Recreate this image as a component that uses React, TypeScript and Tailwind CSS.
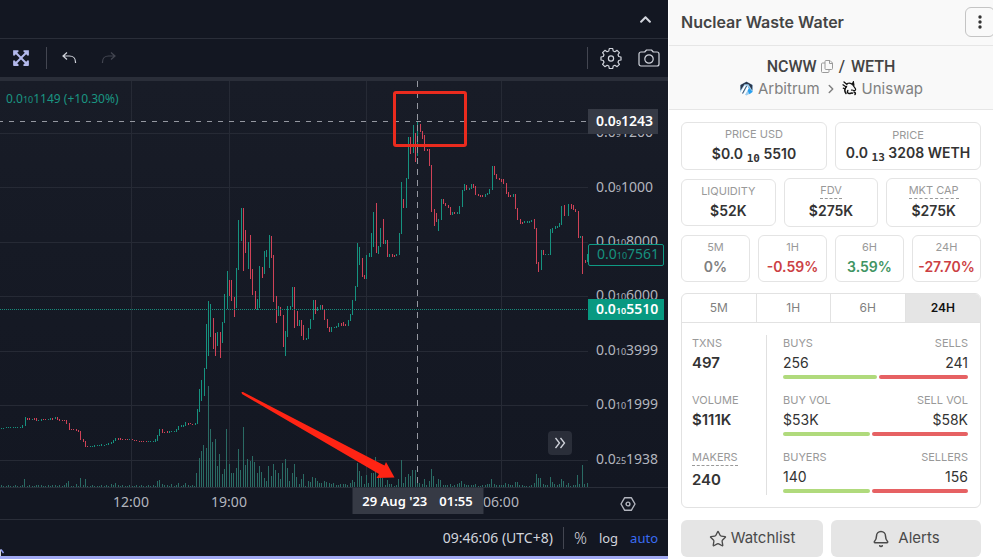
import { FaChevronUp, FaExpandArrowsAlt } from "react-icons/fa";
import { Bell, ChevronRight, Star } from "lucide-react";

const CHART_FONT = "font-['Noto_Sans','Open_Sans',sans-serif]";
const UP = "#16927f";
const DOWN = "#cf4257";

// The plot's own coordinate space: x 0..588, y 81..487.
const PLOT = { left: 0, top: 81, width: 588, height: 406 };

// Each candle is "x top bottom direction".
const CANDLES = `
1 428 429 u;3 428 429 u;6 427 428 u;8 427 428 u;10 427 428 u;13 427 428 u;15 427 428 u;17 427 428 u;20 427 428 u;22 425 428 u;25 417 426 u;
27 418 420 d;29 418 420 d;32 419 420 u;34 418 420 d;36 418 421 d;38 420 421 u;41 419 421 u;43 419 420 d;45 419 420 d;48 419 420 u;50 418 420 u;52 418 420 d;55 417 419 u;57 417 420 d;
59 419 421 d;62 420 421 d;64 420 421 d;66 420 424 d;69 423 430 d;71 429 430 d;73 429 430 d;76 429 431 d;78 430 432 d;80 431 440 d;83 439 442 d;85 441 447 d;87 446 447 d;
90 446 447 u;92 446 447 u;94 445 447 u;97 445 446 u;99 445 446 u;101 444 446 u;104 445 446 u;106 444 445 u;108 443 445 u;111 442 444 u;113 440 443 u;115 438 441 u;118 438 440 d;
120 438 440 d;122 439 440 d;125 439 440 d;127 439 440 d;129 439 440 u;132 439 440 d;134 440 441 d;136 440 441 d;139 441 442 d;141 441 442 d;143 441 442 d;146 441 442 d;148 441 442 u;150 441 442 u;153 441 442 u;155 439 442 u;
157 435 441 u;159 429 436 u;162 429 433 d;164 432 433 d;167 431 433 d;169 431 433 u;171 431 432 u;174 431 432 u;176 429 432 u;178 426 430 u;181 425 427 u;183 425 427 u;185 422 426 u;188 423 425 d;190 423 424 d;192 424 425 d;195 423 425 u;
197 409 424 u;199 389 412 u;201 380 401 u;204 368 396 u;206 324 369 u;208 301 356 u;210 304 337 u;213 318 349 d;215 333 356 d;217 332 346 u;220 332 358 d;222 322 343 u;224 294 323 u;227 271 309 u;229 280 296 d;231 280 301 d;
234 297 317 d;236 268 308 u;238 220 270 u;241 208 241 u;243 208 271 d;245 230 253 d;248 242 269 u;250 235 279 d;252 269 295 d;255 291 309 d;257 299 310 u;259 266 308 u;262 267 278 d;264 251 274 u;266 250 257 u;269 235 268 u;
271 236 258 d;273 255 302 d;276 296 323 d;278 306 316 u;280 307 316 d;283 315 347 d;285 331 356 u;287 306 337 u;290 306 310 u;292 287 307 u;294 287 328 d;297 311 326 d;299 320 326 u;301 320 336 d;303 325 340 d;306 338 340 u;
308 328 339 u;310 319 329 u;313 300 320 u;315 300 314 d;317 307 311 u;320 305 310 u;322 305 310 d;324 309 320 d;327 319 328 d;329 327 332 d;331 327 332 u;334 327 328 u;336 326 328 u;338 323 327 u;341 323 326 d;343 322 326 d;
345 324 326 d;348 320 326 u;350 314 321 u;352 300 315 u;355 286 301 u;357 243 287 u;359 247 265 u;362 258 277 d;364 275 279 d;366 255 279 u;369 253 257 u;371 233 257 u;373 212 247 u;376 203 253 d;378 246 254 u;380 228 247 u;
383 219 244 d;385 240 244 u;387 240 257 d;389 254 257 u;392 254 257 d;394 255 257 d;396 254 256 u;399 233 255 u;401 182 234 u;403 199 208 d;406 178 208 u;408 137 179 u;410 137 154 d;413 125 153 u;415 133 162 d;417 121 156 u;
420 124 132 d;422 131 139 d;424 135 151 d;427 149 151 d;429 149 166 d;431 165 212 d;434 209 226 d;436 213 222 d;438 219 231 u;441 199 220 u;443 199 204 d;445 203 206 d;448 205 208 d;450 207 215 d;452 212 215 u;454 212 214 d;457 212 214 u;459 206 214 u;
462 190 207 u;464 184 191 u;466 185 190 d;469 188 190 u;471 184 189 u;473 184 188 d;475 186 195 d;478 194 196 d;480 195 197 d;482 195 197 d;485 194 197 u;487 193 195 u;489 189 194 u;492 166 190 u;494 166 175 d;496 174 179 d;
499 178 180 d;501 179 182 d;503 179 184 d;506 183 194 d;508 192 197 d;510 195 197 d;513 194 197 u;515 194 209 d;517 208 220 d;520 219 224 d;522 222 224 d;524 221 223 u;527 221 223 u;529 221 223 u;531 220 222 u;534 219 229 d;
536 228 264 d;538 262 272 d;541 250 270 u;543 250 255 d;545 254 255 u;548 254 255 u;550 229 255 u;552 228 233 u;555 226 229 u;557 226 228 u;559 223 227 u;561 206 225 u;564 205 216 d;568 204 216 u;571 204 209 d;573 205 210 d;575 209 212 d;578 211 238 d;580 236 238 u;582 236 274 d;585 260 263 d;587 254 262 u`
  .trim()
  .split(";")
  .map((row) => {
    const [x, top, bottom, dir] = row.trim().split(" ");
    return { x: +x, top: +top, bottom: +bottom, color: dir === "u" ? UP : DOWN };
  });

// Each volume bar is "x height".
const VOLUMES = `
1 2;3 1;6 1;8 2;10 1;13 1;15 2;17 1;20 1;22 2;24 8;27 1;29 2;32 1;34 1;36 2;38 2;41 2;43 1;45 1;48 2;50 1;52 2;55 2;57 1;59 2;62 1;64 2;66 4;68 6;71 1;73 1;76 3;78 1;80 9;83 2;85 8;87 1;90 1;92 2;94 1;97 1;99 1;101 2;104 1;106 2;108 1;111 3;113 2;115 4;118 2;120 1;122 2;125 1;127 1;129 2;132 1;134 1;136 2;139 1;141 2;143 1;146 1;148 2;150 1;153 2;155 1;157 6;159 7;162 3;164 2;167 2;169 1;171 3;174 1;176 2;178 4;181 1;183 2;185 4;188 2;190 1;192 2;194 1;
196 14;199 29;201 36;203 42;206 39;208 101;210 58;212 45;215 48;217 21;219 33;222 13;224 18;226 58;229 23;231 14;233 14;236 19;238 38;240 17;243 60;245 22;247 28;250 26;252 31;254 25;257 14;259 21;261 15;264 9;266 6;268 21;271 11;273 23;275 17;278 14;280 8;282 24;285 28;287 19;289 6;292 14;294 23;296 10;299 3;301 8;303 13;305 1;308 6;310 5;312 10;315 9;317 6;319 4;321 4;324 6;326 5;329 4;331 3;333 4;336 2;338 2;340 3;343 3;345 3;347 2;350 4;352 7;354 5;
357 24;359 16;361 11;364 3;366 12;368 4;371 14;373 14;375 30;378 10;380 10;382 9;385 2;387 7;389 3;391 3;394 1;396 2;398 8;401 27;403 4;405 10;408 13;410 11;412 17;415 17;417 10;419 4;422 3;424 8;426 2;429 6;431 18;433 11;436 3;438 8;440 7;443 2;445 2;447 2;450 3;452 1;454 2;457 3;459 4;461 6;464 3;466 2;468 2;471 2;473 2;475 3;478 1;480 1;482 2;485 2;487 3;489 3;491 8;494 3;496 2;499 2;501 2;503 2;505 4;508 3;510 2;512 2;515 5;517 5;519 2;522 2;524 1;526 1;529 1;531 2;534 4;536 13;538 9;540 9;543 3;545 2;547 2;550 10;552 5;554 3;557 2;559 3;561 8;563 6;566 2;568 4;570 1;573 2;575 2;577 12;579 3;582 22;584 3;587 4`
  .trim()
  .split(";")
  .map((row) => {
    const [x, h] = row.trim().split(" ");
    return { x: +x, h: +h };
  });

// Small prices fold their run of leading zeros into a little count.
const PRICE_TICKS = [
  { zeros: "9", digits: "1200" },
  { zeros: "9", digits: "1000" },
  { zeros: "10", digits: "8000" },
  { zeros: "10", digits: "6000" },
  { zeros: "10", digits: "3999" },
  { zeros: "10", digits: "1999" },
  { zeros: "25", digits: "1938" },
];
const PRICE_LINES = [133, 187, 242, 296, 351, 405, 460];
const TIME_TICKS = [
  { label: "12:00", x: 131 },
  { label: "19:00", x: 229 },
  { label: "", x: 366 },
  { label: "06:00", x: 501 },
];

function TinyPrice({ zeros, digits }: { zeros: string; digits: string }) {
  return (
    <span>
      0.0<span className="text-[9px]">{zeros}</span>
      {digits}
    </span>
  );
}

function Plot() {
  return (
    <svg
      className="absolute inset-0 h-full w-full"
      viewBox={`${PLOT.left} ${PLOT.top} ${PLOT.width} ${PLOT.height}`}
      preserveAspectRatio="none"
      shapeRendering="crispEdges"
      role="img"
      aria-label="NCWW price chart"
    >
      {PRICE_LINES.map((y) => (
        <rect key={y} x="0" y={y} width="588" height="1" fill="#262a35" />
      ))}
      {TIME_TICKS.map((t) => (
        <rect key={t.x} x={t.x} y="81" width="1" height="406" fill="#262a35" />
      ))}
      {VOLUMES.map((v) => (
        <rect key={v.x} x={v.x} y={487 - v.h} width="1" height={v.h} fill="#2a6b64" />
      ))}
      {CANDLES.map((c) => (
        <rect key={c.x} x={c.x} y={c.top} width="1" height={c.bottom - c.top} fill={c.color} />
      ))}
      <path d="M0 309.5H588" stroke="#168c7c" strokeDasharray="1 1" />
      <path d="M-2 121.5H588" stroke="#9598a1" strokeDasharray="5 6" />
      <path d="M417.5 81V487" stroke="#9598a1" strokeDasharray="6 5" />
      <g shapeRendering="auto">
        <path d="M241.5 392 L243 392 L384.5 465.500 L386 462 L394.5 477.5 L376.5 478 L379 474 L242 394 Z" fill="#ff2414" />
        <rect x="394.5" y="92.5" width="71" height="53" rx="1.5" fill="none" stroke="#ea2b1e" strokeWidth="3" />
      </g>
    </svg>
  );
}

function UndoIcon() {
  return (
    <svg width="16" height="14" viewBox="0 0 16 14" fill="none" stroke="currentColor" strokeWidth="1.2">
      <path d="M6 1.500 2 5l4 3.500M2 5h6.500c3.500 0 6 2.500 6 6v1" />
    </svg>
  );
}

function GearIcon() {
  return (
    <svg width="22" height="22" viewBox="0 0 22 22" fill="none" stroke="currentColor" strokeWidth="1.200" strokeLinejoin="round">
      <path d="M9.300 1.500h3.400l.5 2.500 1.700.7 2.200-1.400 2.300 2.300-1.400 2.200.7 1.700 2.300.5v3l-2.300.5-.7 1.700 1.400 2.200-2.300 2.300-2.200-1.400-1.700.7-.5 2.500H9.300L8.800 19l-1.700-.7-2.200 1.400-2.300-2.300L4 15.200l-.7-1.700L1 13v-3l2.300-.5L4 7.800 2.600 5.600l2.300-2.300 2.200 1.400L8.800 4z" />
      <circle cx="11" cy="11.500" r="2.600" />
    </svg>
  );
}

function CameraIcon() {
  return (
    <svg width="22" height="18" viewBox="0 0 22 18" fill="none" stroke="currentColor" strokeWidth="1.200" strokeLinejoin="round">
      <path d="M3 3h3.700l1.800-2h5l1.800 2H19a2 2 0 0 1 2 2v10a2 2 0 0 1-2 2H3a2 2 0 0 1-2-2V5a2 2 0 0 1 2-2z" />
      <circle cx="11" cy="10" r="4.200" />
    </svg>
  );
}

function HexIcon() {
  return (
    <svg width="16" height="16" viewBox="0 0 16 16" fill="none" stroke="currentColor" strokeWidth="1.400">
      <path d="M4.700 1.700h6.600L15 8l-3.700 6.300H4.700L1 8z" strokeLinejoin="round" />
      <circle cx="8" cy="8" r="1.900" />
    </svg>
  );
}

function CopyIcon() {
  return (
    <svg width="12" height="13" viewBox="0 0 12 13" fill="none" stroke="#9a9a9a" strokeWidth="1">
      <path d="M4 1.500a1 1 0 0 1 1-1h4l2.500 2.500v5.500a1 1 0 0 1-1 1H5a1 1 0 0 1-1-1zM8.500.5V3.500h3" />
      <path d="M4 3H1.500a1 1 0 0 0-1 1v7.500a1 1 0 0 0 1 1h5.500a1 1 0 0 0 1-1v-2" />
    </svg>
  );
}

function ArbitrumIcon() {
  return (
    <svg width="15" height="15" viewBox="0 0 15 15">
      <path d="M7.500.5 13.800 4v7l-6.300 3.500L1.200 11V4z" fill="#9dcced" />
      <path d="M7.500.8 13.300 4v5.500L9.500 3.300H5.500L1.500 9.500V4z" fill="#2d374b" />
      <path d="M9.300 6 13.500 10.800l-3 2.500-2.500-5z" fill="#28a0f0" />
      <path d="M5.500 4.500h1.700L3 12.300l-1.600-1zM8.300 5l1.500 2.500-4 6.500-1.500-.8z" fill="#fff" />
      <path d="M7.600 5 3.500 12.500" stroke="#2d374b" strokeWidth=".8" />
    </svg>
  );
}

function UniswapIcon() {
  return (
    <svg width="16" height="15" viewBox="0 0 16 15" fill="none" stroke="#111" strokeLinecap="round">
      <path d="M2 1l3 2.500M1 3.800l2.800 2M1.300 7.200l1.700.8" strokeWidth="1.300" />
      <path d="M5 2.500c2-.8 4.500-.3 5.800 1.500l2.400 3.300c.8 1.200.4 2-.6 2.200-1.400.2-2-.8-3.100-.4" strokeWidth="1.200" />
      <path d="M4.500 5.500c-1.800 2-2 5-.5 7M5.800 9.500c-.8 1.600-.2 2.900 1.200 3.100 1.600.2 2.300-1 3.500-.4" strokeWidth="1.500" />
      <path d="M10.500 2.800l.8-1.500.5 2.800M12 11c1.200.2 1.700 1.200 1 2.500" strokeWidth="1.500" />
    </svg>
  );
}

function MoreIcon() {
  return (
    <svg width="4" height="14" viewBox="0 0 4 14" fill="#333">
      <circle cx="2" cy="2" r="1.700" />
      <circle cx="2" cy="7" r="1.700" />
      <circle cx="2" cy="12" r="1.700" />
    </svg>
  );
}

function ChartPane() {
  return (
    <section className={`flex min-w-0 flex-1 flex-col bg-[#131722] text-[#d1d4dc] ${CHART_FONT}`}>
      <div className="flex h-[39px] items-center justify-end border-b border-[#2a2e39] pr-4">
        <button type="button" aria-label="Collapse">
          <FaChevronUp size={13} />
        </button>
      </div>
      <div className="flex h-[42px] items-center border-b-4 border-[#2a2e39] pr-2 pl-3">
        <button type="button" aria-label="Full size" className="text-[#b3b9ec]">
          <FaExpandArrowsAlt size={18} />
        </button>
        <span className="mr-3.5 ml-4 h-[22px] w-px bg-[#434651]" />
        <button type="button" aria-label="Undo">
          <UndoIcon />
        </button>
        <button type="button" aria-label="Redo" className="ml-6 -scale-x-100 text-[#434651]">
          <UndoIcon />
        </button>
        <span className="mr-3 ml-auto h-[22px] w-px bg-[#434651]" />
        <button type="button" aria-label="Settings" className="mr-4">
          <GearIcon />
        </button>
        <button type="button" aria-label="Snapshot">
          <CameraIcon />
        </button>
      </div>

      <div className="flex min-h-[406px] flex-1 border-b border-[#2a2e39] bg-linear-to-b from-[#181c27] to-[#131722]">
        <div className="relative flex-1">
          <Plot />
          <p className="absolute top-2 left-1.5 text-xs leading-5 text-[#1a9582]">
            <TinyPrice zeros="10" digits="1149" /> (+10.30%)
          </p>
          <button
            type="button"
            aria-label="Scroll to latest bar"
            className="absolute right-4 bottom-8 flex size-6 items-center justify-center rounded bg-[#2a2e39]"
          >
            <svg width="12" height="12" viewBox="0 0 12 12" fill="none" stroke="currentColor" strokeWidth="1.300">
              <path d="M1.500 1l4 5-4 5M6.500 1l4 5-4 5" />
            </svg>
          </button>
        </div>
        <div className="relative flex w-20 flex-col pt-[25px] text-sm leading-5 text-[#b2b5be]">
          {PRICE_TICKS.map((t) => (
            <div key={t.digits} className="flex flex-1 items-center pl-2">
              <TinyPrice zeros={t.zeros} digits={t.digits} />
            </div>
          ))}
          <span className="absolute top-7 left-0 flex h-[25px] w-[70px] items-center bg-[#363a45] pl-2 font-semibold text-white">
            <TinyPrice zeros="9" digits="1243" />
          </span>
          <span className="absolute top-[163px] left-0 flex h-[22px] w-[76px] items-center rounded-xs border border-[#0f9a84] bg-[#171b26] pl-2 text-[#16927f]">
            <TinyPrice zeros="10" digits="7561" />
          </span>
          <span className="absolute top-[218px] left-0 flex h-[21px] w-[76px] items-center bg-[#089981] pl-2 font-semibold text-white">
            <TinyPrice zeros="10" digits="5510" />
          </span>
        </div>
      </div>

      <div className="flex h-8 border-b border-[#2a2e39] leading-5 text-[#b2b5be]">
        <div className="relative flex-1">
          {TIME_TICKS.map((t) => (
            <span
              key={t.x}
              className="absolute top-1 -translate-x-1/2 text-sm"
              style={{ left: `${(t.x / PLOT.width) * 100}%` }}
            >
              {t.label}
            </span>
          ))}
          <span
            className="absolute top-0 flex h-[26px] w-[131px] -translate-x-1/2 items-center justify-center gap-3 bg-[#363a45] text-[13px] font-semibold text-white"
            style={{ left: `${(417.5 / PLOT.width) * 100}%` }}
          >
            <span>29 Aug '23</span>
            <span>01:55</span>
          </span>
        </div>
        <div className="flex w-20 items-center justify-center">
          <button type="button" aria-label="Axis settings">
            <HexIcon />
          </button>
        </div>
      </div>

      <div className="flex h-9 items-center pr-2.5 text-[13px] leading-5">
        <svg className="self-end" width="6" height="8" viewBox="0 0 6 8" fill="none">
          <path d="M.5 1.500V8" stroke="#d1d4dc" />
          <path d="M1 1.500 3.500 5" stroke="#8f9bf5" strokeWidth="1.400" />
        </svg>
        <button type="button" className="ml-auto text-sm">09:46:06 (UTC+8)</button>
        <span className="mx-2.5 h-[22px] w-px bg-[#434651]" />
        <button type="button" className="text-base font-light">%</button>
        <button type="button" className="ml-3">log</button>
        <button type="button" className="ml-3 text-[#3a6cf4]">auto</button>
      </div>
      <div className="h-[3px] bg-[#a0a9f3]" />
    </section>
  );
}

const LABEL = "text-[11px] leading-4 text-[#999]";
const CARD = "flex flex-1 flex-col items-center justify-center rounded-md border border-[#e4e4e4] bg-white";

function Stat({ label, value, tone, dashed }: { label: string; value: string; tone: string; dashed?: boolean }) {
  return (
    <div className={`${CARD} pb-0.5 ${dashed ? "h-[49px]" : "h-[47px]"}`}>
      <span className={dashed ? `${LABEL} border-b border-dashed border-[#999]` : LABEL}>{label}</span>
      <span className={`mt-0.5 text-sm leading-5 font-semibold ${tone}`}>{value}</span>
    </div>
  );
}

const SUB = "font-['DejaVu_Sans_Mono',monospace] text-[11px] leading-none";

const SIDES = [
  { left: "BUYS", right: "SELLS", a: "256", b: "241", ratio: 51 },
  { left: "BUY VOL", right: "SELL VOL", a: "$53K", b: "$58K", ratio: 47 },
  { left: "BUYERS", right: "SELLERS", a: "140", b: "156", ratio: 47 },
];

function InfoPane() {
  return (
    <aside className="w-[325px] shrink-0 overflow-hidden border-l border-white bg-white font-['Inter','Liberation_Sans',sans-serif] text-[#333]">
      <header className="flex h-[46px] items-center justify-between border-b border-[#e6e6e6] bg-[#f9f9f9] pb-0.5 pl-3">
        <h1 className="text-base font-semibold text-[#444]">Nuclear Waste Water</h1>
        <button
          type="button"
          aria-label="More"
          className="-mr-0.5 flex h-[30px] w-[30px] items-center justify-center rounded-md border border-[#c4c4c4]"
        >
          <MoreIcon />
        </button>
      </header>
      <div className="flex h-16 flex-col items-center justify-center gap-0.5 border-b border-[#e6e6e6] bg-[#f9f9f9]">
        <h2 className="flex items-center gap-1 font-['Roboto','Inter',sans-serif] text-base leading-5 font-medium text-[#444]">
          NCWW
          <CopyIcon />
          <span className="mx-0.5">/</span>
          WETH
        </h2>
        <p className="flex items-center gap-1 text-[15px] leading-5 text-[#808080]">
          <ArbitrumIcon />
          <span>Arbitrum</span>
          <ChevronRight size={14} strokeWidth={2.500} />
          <UniswapIcon />
          <span>Uniswap</span>
        </p>
      </div>

      <div className="flex flex-col px-3 pt-3 pb-0.5">
        <div className="flex gap-2">
          <div className={`${CARD} h-12 gap-0.5 pb-0.5`}>
            <span className={LABEL}>PRICE USD</span>
            <span className="text-sm leading-5 font-semibold whitespace-nowrap">
              $0.0 <sub className={SUB}>10</sub> 5510
            </span>
          </div>
          <div className={`${CARD} h-12 pb-0.5`}>
            <span className={LABEL}>PRICE</span>
            <span className="text-sm leading-5 font-semibold whitespace-nowrap">
              0.0 <sub className={SUB}>13</sub> 3208 WETH
            </span>
          </div>
        </div>
        <div className="mt-2 flex items-center gap-2">
          <Stat label="LIQUIDITY" value="$52K" tone="text-[#333]" />
          <Stat label="FDV" value="$275K" tone="text-[#333]" dashed />
          <Stat label="MKT CAP" value="$275K" tone="text-[#333]" dashed />
        </div>
        <div className="mt-2 flex gap-2">
          <Stat label="5M" value="0%" tone="text-[#808080]" />
          <Stat label="1H" value="-0.59%" tone="text-[#cc3f44]" />
          <Stat label="6H" value="3.59%" tone="text-[#3f9463]" />
          <Stat label="24H" value="-27.70%" tone="text-[#cc3f44]" />
        </div>

        <div className="mt-[11px] overflow-hidden rounded-md border border-[#e2e2e2]">
          <div className="grid h-[29px] grid-cols-4 divide-x divide-[#e2e2e2] border-b border-[#e2e2e2] text-xs text-[#808080]">
            <button type="button">5M</button>
            <button type="button">1H</button>
            <button type="button">6H</button>
            <button type="button" className="bg-[#e5e5e5] font-semibold text-[#111]">24H</button>
          </div>
          <div className="flex py-3 pr-3 pl-2.5">
            <div className="flex w-[75px] flex-col border-r border-[#e0e0e0]">
              <div className="h-[57px]">
                <p className={LABEL}>TXNS</p>
                <p className="mt-0.5 text-[15px] leading-5 font-semibold">497</p>
              </div>
              <div className="h-[57px]">
                <p className={LABEL}>VOLUME</p>
                <p className="mt-0.5 text-[15px] leading-5 font-semibold">$111K</p>
              </div>
              <div>
                <p className={LABEL}>
                  <span className="inline-block border-b border-dashed border-[#999]">MAKERS</span>
                </p>
                <p className="mt-1 text-[15px] leading-5 font-semibold">240</p>
              </div>
            </div>
            <div className="flex flex-1 flex-col gap-[13px] pb-0.5 pl-4">
              {SIDES.map((s) => (
                <div key={s.left}>
                  <div className={`flex justify-between ${LABEL}`}>
                    <span>{s.left}</span>
                    <span>{s.right}</span>
                  </div>
                  <div className="mt-0.5 flex justify-between text-sm leading-5">
                    <span>{s.a}</span>
                    <span>{s.b}</span>
                  </div>
                  <div className="mt-0.5 flex h-1 gap-0.5">
                    <span className="rounded-full bg-[#b0da7c]" style={{ width: `${s.ratio}%` }} />
                    <span className="flex-1 rounded-full bg-[#e66163]" />
                  </div>
                </div>
              ))}
            </div>
          </div>
        </div>

        <div className="mt-3 flex gap-2 text-[15px] text-[#4a4a4a]">
          <button type="button" className="flex h-[37px] w-[142px] items-center justify-center gap-1 rounded-md bg-[#e5e5e5]">
            <Star size={18} strokeWidth={1.800} />
            Watchlist
          </button>
          <button type="button" className="flex h-[37px] flex-1 items-center justify-center gap-2 rounded-md bg-[#e5e5e5]">
            <Bell size={18} strokeWidth={2} />
            Alerts
          </button>
        </div>
      </div>
    </aside>
  );
}

export default function App() {
  return (
    <main className="flex min-h-screen bg-[#131722]">
      <ChartPane />
      <InfoPane />
    </main>
  );
}
